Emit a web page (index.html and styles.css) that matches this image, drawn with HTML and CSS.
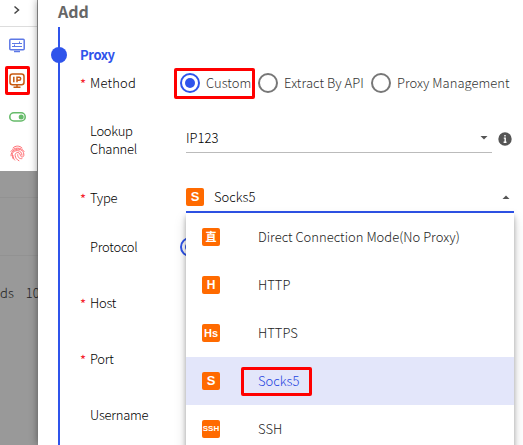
FILE: index.html
```html
<!DOCTYPE html>
<html lang="en">
<head>
<meta charset="utf-8">
<title>Add proxy</title>
<link rel="stylesheet" href="styles.css">
</head>
<body>
<div class="app">
  <aside class="backdrop">
    <nav class="rail">
      <div class="rail-toggle"><svg width="8" height="10" viewBox="0 0 8 10"><path d="M1.5 1.5 5.5 5 1.5 8.5" fill="none" stroke="#444" stroke-width="1.5"/></svg></div>
      <div class="rail-item"><svg width="16" height="15" viewBox="0 0 16 15" fill="none" stroke="#5d78e6" stroke-width="1.5"><rect x=".8" y="1.2" width="14.4" height="10.5" rx="1"/><path d="M3 5.5h10M10.5 3.5v2M3 8.5h10M5.5 8.5v-2" stroke-width="1"/><path d="M5 13.5h6"/></svg></div>
      <div class="rail-item active"><svg width="16" height="16" viewBox="0 0 16 16" fill="none" stroke="#c85a10" stroke-width="1.5"><rect x="1" y="1" width="14" height="10.8" rx="2.5"/><path d="M4.8 3.7v5.6M8 9.3V4.3h2.2a1.5 1.5 0 0 1 0 3H8M8 11.8v2.5M4.5 14.3h7"/></svg></div>
      <div class="rail-item"><svg width="17" height="10" viewBox="0 0 17 10"><rect x=".8" y=".8" width="15.4" height="8.2" rx="4.1" fill="#fff" stroke="#66bb6a" stroke-width="1.6"/><circle cx="12.2" cy="4.9" r="2.5" fill="#66bb6a"/></svg></div>
      <div class="rail-item"><svg width="15" height="17" viewBox="0 0 16 17" fill="none" stroke="#ff6b70" stroke-width="1.05" stroke-linecap="round"><path d="M3.2 2.5C6-.1 10-.1 12.8 2.5M1 6.3C3.8 1.5 12.2 1.5 15 6.3M1.1 11C.5 1.8 15.8 1.2 14.7 10.8c-.3 2-3.4 1.8-3.7-.4-.2-4-5.7-3.8-5.5.1.2 2.7 1.7 4.7 4 5.7M3.2 13.8C.9 7.3 4 5.6 7.8 5.4c3.2 0 5 2.5 5 5M8.2 9.7c0 3.4 2.1 4.6 4.5 4.3M5 15.5c-1-1.1-1.7-2.7-1.8-4.8"/></svg></div>
    </nav>
    <div class="strip strip-top"></div>
    <div class="strip strip-mid"></div>
    <div class="strip strip-table"><span>ds</span><span>10</span></div>
  </aside>

  <main class="drawer">
    <h1>Add</h1>
    <section class="step">
      <div class="step-title">Proxy</div>
      <div class="row method">
        <label class="required">Method</label>
        <div class="radios">
          <span class="radio on"><i></i><b class="t-custom">Custom</b></span>
          <span class="radio"><i></i><b class="t-api">Extract By API</b></span>
          <span class="radio"><i></i><b class="t-manage">Proxy Management</b></span>
        </div>
      </div>
      <div class="row lookup">
        <label>Lookup<br>Channel</label>
        <div class="select"><span>IP123</span><svg class="caret" width="8" height="4" viewBox="0 0 8 4"><path d="M.5 0h7L4 3.5z"/></svg></div>
        <svg class="info" width="14" height="14" viewBox="0 0 14 14"><circle cx="7" cy="7" r="6.7" fill="#555"/><path d="M7 3v1.6M5.8 6.1h1.4v4.2M5.6 10.3h2.9" stroke="#fff" stroke-width="1.4" fill="none"/></svg>
      </div>
      <div class="row type">
        <label class="required">Type</label>
        <div class="select open"><em class="badge badge-s">S</em><span>Socks5</span><svg class="caret" width="8" height="4" viewBox="0 0 8 4"><path d="M.5 4h7L4 .5z"/></svg>
          <div class="menu">
            <div class="option"><em class="badge cjk">直</em><span>Direct Connection Mode(No Proxy)</span></div>
            <div class="option"><em class="badge">H</em><span>HTTP</span></div>
            <div class="option"><em class="badge badge-hs">Hs</em><span>HTTPS</span></div>
            <div class="option selected"><em class="badge badge-s">S</em><span>Socks5</span></div>
            <div class="option"><em class="badge badge-ssh">SSH</em><span>SSH</span></div>
          </div>
        </div>
      </div>
      <div class="row"><label>Protocol</label><div class="radios"><span class="radio on"><i></i></span></div></div>
      <div class="row"><label class="required">Host</label></div>
      <div class="row"><label class="required">Port</label></div>
      <div class="row"><label>Username</label></div>
    </section>
  </main>
  <div class="mark mark-rail"></div>
  <div class="mark mark-method"></div>
  <div class="mark mark-option"></div>
</div>
</body>
</html>
```
FILE: styles.css
```css
* { box-sizing: border-box; }
body { margin: 0; font: 300 13px/18px "Noto Sans CJK SC", "Noto Sans", sans-serif; letter-spacing: .01px; color: #000; }
.app { position: relative; display: flex; width: 523px; height: 445px; overflow: hidden; background: #fff; }
.backdrop { width: 38px; flex: none; background: #999; }
.rail { width: 37px; height: 171px; background: #fff; }
.rail-toggle { height: 27px; display: flex; align-items: center; justify-content: center; padding: 0 3px 6px 0; border-bottom: 1px solid #ddd; }
.rail-item { height: 36px; display: flex; align-items: center; justify-content: center; padding-right: 3px; }
.strip-top { height: 27px; border-bottom: 1px solid #929292; }
.strip-mid { height: 58px; border-bottom: 1px solid #929292; }
.strip-table { display: flex; gap: 12px; height: 189px; padding-top: 28px; font-size: 13px; color: #222; }
.drawer { flex: 1; min-width: 0; background: #fff; box-shadow: 0 0 8px rgba(0,0,0,.45); position: relative; }
h1 { height: 27px; margin: 0; padding-left: 20px; font-size: 16px; line-height: 23px; font-weight: 600; color: #666; letter-spacing: 0; }
.step { margin-left: 20px; border-left: 2px solid #2f54eb; height: 418px; padding-top: 19px; }
.step-title { position: relative; height: 18px; padding-left: 20px; color: #2f54eb; font-weight: 600; line-height: 18px; letter-spacing: -.4px; }
.step-title::before { content: ""; position: absolute; left: -9px; top: 1px; width: 16px; height: 16px; border-radius: 50%; background: #2f54eb; }
.row { display: flex; align-items: center; height: 56px; padding-left: 30px; }
.row label { position: relative; width: 96px; flex: none; letter-spacing: -.25px; }
.required::before { content: "*"; position: absolute; left: -10px; top: 1px; color: #f5222d; font-size: 13px; font-weight: 400; }
.row.method { height: 38px; }
.row.method label { letter-spacing: .2px; }
.row.lookup { height: 75px; }
.row.type { height: 42px; }
.radios { display: flex; align-items: center; margin-left: -6px; }
.radio { display: flex; align-items: center; gap: 6px; white-space: nowrap; color: #333; }
.radio b { font-weight: 300; }
.t-custom { width: 52px; }
.t-api { width: 87px; letter-spacing: .05px; }
.t-manage { width: 112px; }
.radio i { width: 20px; height: 20px; border: 2px solid #777; border-radius: 50%; display: grid; place-items: center; }
.radio.on i { border-color: #2f54eb; }
.radio.on i::after { content: ""; width: 10px; height: 10px; border-radius: 50%; background: #2f54eb; }
.select { position: relative; display: flex; align-items: center; width: 306px; height: 30px; padding-top: 2px; margin-bottom: 4px; border-bottom: 1px solid #bbb; }
.caret { margin-left: auto; margin-right: 4px; fill: #555; }
.info { margin-left: 6px; margin-bottom: 2px; }
.select.open { width: 328px; height: 32px; margin-bottom: 2px; border-bottom: 2px solid #2f54eb; }
.badge { width: 18px; height: 18px; border-radius: 2px; background: #ff6a00; color: #fff; font: 700 12px/18px "Liberation Sans", sans-serif; text-align: center; flex: none; letter-spacing: 0; }
.select > .badge { margin-right: 10px; }
.badge.cjk { font: 700 11px/17px "Noto Sans CJK SC", sans-serif; }
.badge-s { font-size: 13px; }
.badge-hs { font-size: 11px; }
.badge-ssh { font-size: 8px; }
.menu { position: absolute; top: 32px; left: 0; width: 328px; background: #fff; box-shadow: 0 3px 5px rgba(0,0,0,.3), 0 6px 12px rgba(0,0,0,.15); z-index: 2; }
.option { display: flex; align-items: center; gap: 38px; height: 48px; padding-left: 16px; color: #222; white-space: nowrap; }
.option.selected { background: #e3e6fa; color: #1f44e0; }
/* Annotation frames over the form */
.mark { position: absolute; border: 3px solid #f00; border-radius: 2px; z-index: 3; }
.mark-rail { left: 5px; top: 66px; width: 25px; height: 29px; }
.mark-method { left: 174px; top: 68px; width: 81px; height: 31px; }
.mark-option { left: 241px; top: 367px; width: 71px; height: 29px; }
```
